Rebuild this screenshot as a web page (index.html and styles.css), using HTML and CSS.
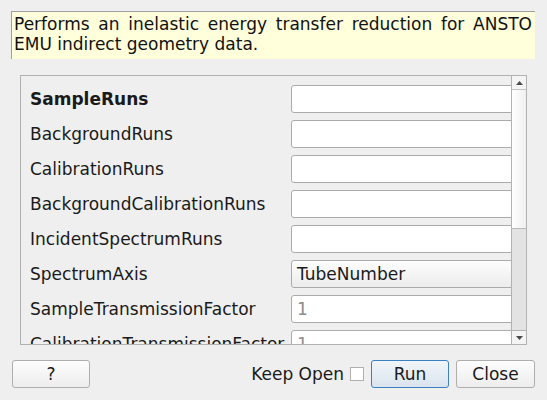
FILE: index.html
```html
<!DOCTYPE html>
<html>
<head>
<meta charset="utf-8">
<link rel="stylesheet" href="styles.css">
</head>
<body>
<div class="dialog">
  <div class="desc">Performs an inelastic energy transfer reduction for ANSTO EMU indirect geometry data.</div>
  <div class="scroll">
    <div class="viewport">
      <div class="form">
        <div class="label bold">SampleRuns</div><div class="field"></div>
        <div class="label">BackgroundRuns</div><div class="field"></div>
        <div class="label">CalibrationRuns</div><div class="field"></div>
        <div class="label">BackgroundCalibrationRuns</div><div class="field"></div>
        <div class="label">IncidentSpectrumRuns</div><div class="field"></div>
        <div class="label">SpectrumAxis</div><div class="field combo">TubeNumber</div>
        <div class="label">SampleTransmissionFactor</div><div class="field placeholder">1</div>
        <div class="label">CalibrationTransmissionFactor</div><div class="field placeholder">1</div>
      </div>
    </div>
    <div class="scrollbar">
      <div class="sb-btn sb-up"><svg width="7" height="4" viewBox="0 0 7 4"><path d="M0 4 L3.5 0 L7 4 Z" fill="#4a4a4a"/></svg></div>
      <div class="sb-handle"></div>
      <div class="sb-trough"></div>
      <div class="sb-btn sb-down"><svg width="7" height="4" viewBox="0 0 7 4"><path d="M0 0 L3.5 4 L7 0 Z" fill="#4a4a4a"/></svg></div>
    </div>
  </div>
  <div class="buttons">
    <button class="btn help">?</button>
    <div class="spacer"></div>
    <span class="keep">Keep Open</span>
    <span class="check"></span>
    <button class="btn run">Run</button>
    <button class="btn close">Close</button>
  </div>
</div>
</body>
</html>
```

FILE: styles.css
```css
html, body {
  margin: 0;
  padding: 0;
  background: #efefef;
  font-family: "DejaVu Sans", sans-serif;
  color: #1a1a1a;
}
.dialog {
  width: 547px;
  height: 400px;
  display: flex;
  flex-direction: column;
  padding-top: 11px;
  box-sizing: border-box;
}
.desc {
  margin-left: 11px;
  width: 524px;
  height: 48px;
  flex: none;
  box-sizing: border-box;
  background: #ffffdc;
  border-top: 1px solid #a0a0a0;
  border-left: 1px solid #a0a0a0;
  padding: 3px 3px 0 2px;
  font-size: 17px;
  line-height: 19.5px;
  text-align: justify;
  color: #111;
}
.scroll {
  margin-top: 16px;
  margin-left: 20px;
  width: 507px;
  height: 270px;
  flex: none;
  box-sizing: border-box;
  border: 1px solid #b2b2b2;
  display: flex;
}
.viewport {
  flex: 1;
  overflow: hidden;
  position: relative;
}
.form {
  display: grid;
  grid-template-columns: 261px 240px;
  grid-auto-rows: 28px;
  row-gap: 7px;
  padding: 9px 0 0 9px;
  font-size: 17px;
}
.label {
  display: flex;
  align-items: center;
  white-space: nowrap;
}
.bold { font-weight: bold; }
.field {
  background: #fff;
  border: 1px solid #ababab;
  border-radius: 3px;
  box-sizing: border-box;
  display: flex;
  align-items: center;
  padding-left: 5px;
}
.combo {
  background: linear-gradient(#fdfdfd, #ececec);
  padding-left: 5px;
}
.placeholder { color: #8c8c8c; }
.scrollbar {
  width: 14px;
  border-left: 1px solid #b2b2b2;
  display: flex;
  flex-direction: column;
  background: #e3e3e3;
}
.sb-btn {
  height: 13px;
  display: flex;
  align-items: center;
  justify-content: center;
  background: #f4f4f4;
}
.sb-up { border-bottom: 1px solid #c4c4c4; }
.sb-down { border-top: 1px solid #b2b2b2; }
.sb-handle {
  height: 138px;
  background: linear-gradient(to right, #ffffff, #f0f0f0);
  border-bottom: 1px solid #b8b8b8;
}
.sb-trough { flex: 1; }
.buttons {
  margin-top: 15px;
  display: flex;
  align-items: center;
  padding: 0 12px 0 12px;
  height: 28px;
  flex: none;
}
.spacer { flex: 1; }
.btn {
  height: 28px;
  font-family: "DejaVu Sans", sans-serif;
  font-size: 17px;
  color: #1a1a1a;
  border: 1px solid #aeaeae;
  border-radius: 3px;
  background: linear-gradient(#fdfdfd, #ededed);
  padding: 0;
}
.help { width: 78px; }
.keep { font-size: 17px; margin-right: 6px; }
.check {
  width: 12px;
  height: 12px;
  border: 1px solid #b0b0b0;
  background: #fff;
  margin-right: 7px;
}
.run {
  width: 78px;
  border-color: #3a7fbf;
  background: linear-gradient(#f1f5f9, #dae4ee);
  margin-right: 7px;
}
.close { width: 79px; }
```
